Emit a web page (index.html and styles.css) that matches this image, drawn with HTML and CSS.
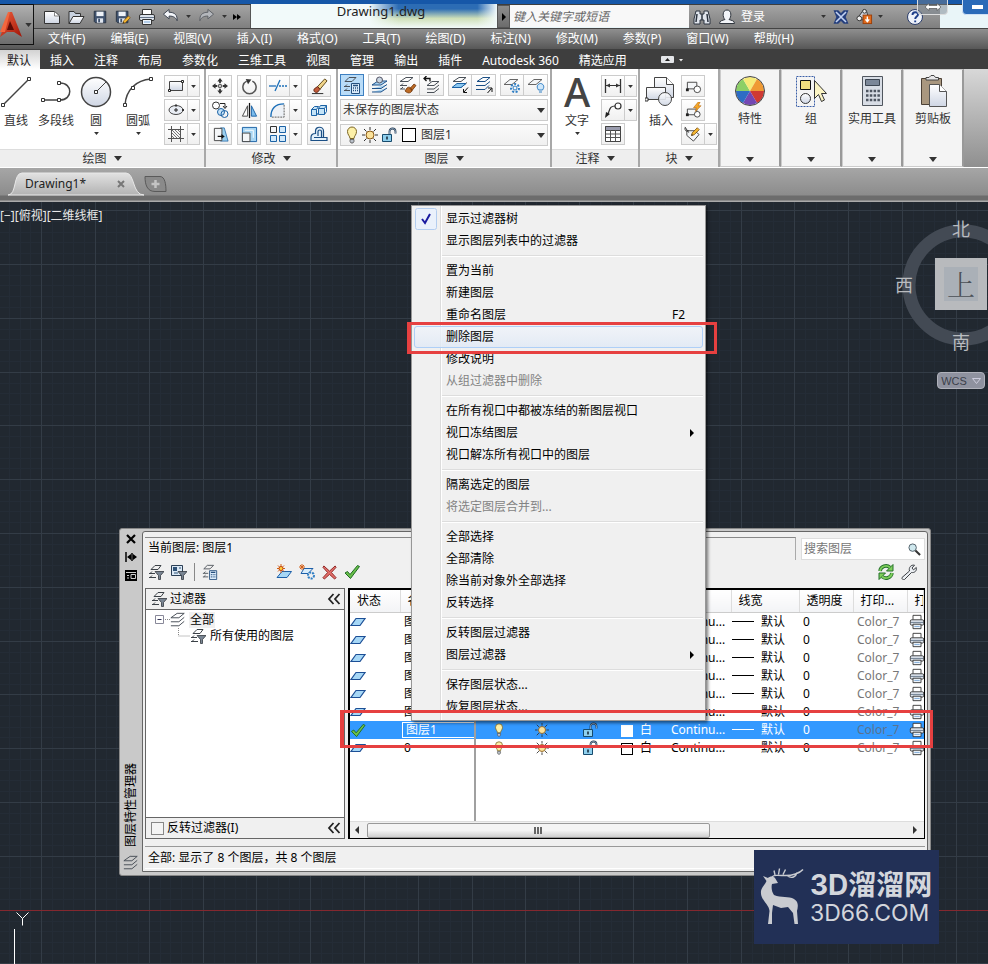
FILE: index.html
```html
<!DOCTYPE html>
<html lang="zh-CN">
<head>
<meta charset="utf-8">
<title>Drawing1.dwg</title>
<link rel="stylesheet" href="styles.css">
</head>
<body>
<svg class="defs" aria-hidden="true">
  <defs>
    <linearGradient id="gSheet" x1="0" y1="0" x2="0" y2="1"><stop offset="0" stop-color="#fff"/><stop offset="1" stop-color="#cfd6e4"/></linearGradient>
    <linearGradient id="gRed" x1="0" y1="0" x2="1" y2="1"><stop offset="0" stop-color="#f0603c"/><stop offset="1" stop-color="#a01408"/></linearGradient>
    <pattern id="grid" width="269" height="269" patternUnits="userSpaceOnUse" x="41" y="8">
      <path shape-rendering="crispEdges" stroke="#242c36" fill="none" d="M11.5 0V269M22.5 0V269M32.5 0V269M43.5 0V269M65.5 0V269M75.5 0V269M86.5 0V269M97.5 0V269M119.5 0V269M129.5 0V269M140.5 0V269M151.5 0V269M173.5 0V269M183.5 0V269M194.5 0V269M205.5 0V269M226.5 0V269M237.5 0V269M248.5 0V269M258.5 0V269M0 11.5H269M0 22.5H269M0 32.5H269M0 43.5H269M0 65.5H269M0 75.5H269M0 86.5H269M0 97.5H269M0 119.5H269M0 129.5H269M0 140.5H269M0 151.5H269M0 173.5H269M0 183.5H269M0 194.5H269M0 205.5H269M0 226.5H269M0 237.5H269M0 248.5H269M0 258.5H269"/>
      <path shape-rendering="crispEdges" stroke="#333c46" fill="none" d="M.5 0V269M54.5 0V269M108.5 0V269M162.5 0V269M215.5 0V269M0 .5H269M0 54.5H269M0 108.5H269M0 162.5H269M0 215.5H269"/>
    </pattern>
  </defs>
  <symbol id="down" viewBox="0 0 8 5"><path d="M0 0h8L4 5z" fill="currentColor"/></symbol>
  <symbol id="new" viewBox="0 0 18 18"><path d="M1.500 3.500h10l5 4.500v7.500h-15z" fill="url(#gSheet)" stroke="#333"/><path d="M11.500 3.500v4.500h5z" fill="#fff" stroke="#555" stroke-width=".7"/></symbol>
  <symbol id="open" viewBox="0 0 18 18"><path d="M2 15.500v-12h5l1.500 2h5v3" fill="#c9d2e0" stroke="#333"/><path d="M2 15.500l4-7h11l-4 7z" fill="url(#gSheet)" stroke="#333"/></symbol>
  <symbol id="save" viewBox="0 0 18 18"><path d="M2.500 2.500h13v13H4L2.500 14z" fill="#40536f" stroke="#26303f"/><path d="M5 3h8v5H5z" fill="#eef2f8"/><path d="M5.500 10.500h7v5h-7z" fill="#dfe5ee"/><path d="M7 11h2v4H7z" fill="#40536f"/></symbol>
  <symbol id="pencil" viewBox="0 0 12 12"><path d="M1 11l1-3.500 6.500-6.500 2.500 2.500L4.500 10z" fill="#f3b632" stroke="#6c4208" stroke-width=".9"/><path d="M1 11l.6-2 1.500 1.500z" fill="#222"/></symbol>
  <symbol id="saveas" viewBox="0 0 20 18"><use href="#save" width="18" height="18"/><use href="#pencil" x="9" y="7" width="10" height="10"/></symbol>
  <symbol id="printer" viewBox="0 0 18 18"><path d="M4.500 6.500v-5h9v5" fill="#fff" stroke="#333"/><rect x="1.500" y="6.500" width="15" height="6" rx="1.500" fill="#dce3ec" stroke="#333"/><path d="M2 9.500h14" stroke="#67768a"/><path d="M4.500 11.500h9v5h-9z" fill="#eef4fa" stroke="#333"/><path d="M6 14h6" stroke="#7aa7d8"/></symbol>
  <symbol id="undo" viewBox="0 0 18 18"><path d="M1.500 6.500L7.500 1.500v3c6 0 9 3 8.500 9-1-3-3.500-5-8.500-5v3z" fill="#f4f6fa" stroke="#38404c"/></symbol>
  <symbol id="redo" viewBox="0 0 18 18"><path d="M16.500 6.500L10.500 1.500v3c-6 0-9 3-8.500 9 1-3 3.500-5 8.500-5v3z" fill="#b4b7bc" stroke="#5a5e64"/></symbol>
  <symbol id="binoc" viewBox="0 0 18 18"><path d="M3 3h4v3h4V3h4l2 8v5h-6v-4H7v4H1v-5z" fill="#dfe4ec" stroke="#2c3440"/><path d="M4 6l-1 8M14 6l1 8M9 6v6" stroke="#2c3440" stroke-width="1.500"/></symbol>
  <symbol id="user" viewBox="0 0 18 18"><path d="M1.500 15.500c0-3 3-3 5.500-4-2.500-2-3-9.500 2-9.500s4.500 7.500 2 9.500c2.500 1 5.500 1 5.500 4z" fill="#f2f4f8" stroke="#30363e"/></symbol>
  <symbol id="exch" viewBox="0 0 16 16"><path d="M1.500 2h3.500L8 5l3-3h3.500L12 8l2.500 6H11L8 11l-3 3H1.500L4 8z" fill="#26407e" stroke="#26407e" stroke-width="1.300"/><path d="M3 3l5 5-5 5M13 3L8 8l5 5" fill="none" stroke="#c3d3f2" stroke-width="1.600"/></symbol>
  <symbol id="update" viewBox="0 0 18 18"><path d="M1.500 11L4 7.500 8 2l3 1 1.500 5M1.500 11l2 2 6-1" fill="#cfd6e2" stroke="#333"/><circle cx="9" cy="3.500" r="2" fill="#eee" stroke="#333"/><circle cx="3.500" cy="11" r="2.500" fill="#eee" stroke="#333"/><rect x="7.500" y="7.500" width="9" height="9" fill="#e06a1c" stroke="#9c3f08"/><path d="M12 9v5M10 12l2 2.500 2-2.500" stroke="#fff" stroke-width="1.500" fill="none"/></symbol>
  <symbol id="help" viewBox="0 0 18 18"><circle cx="9" cy="9" r="7.500" fill="#eef2fa" stroke="#2a3c6a"/><path d="M6.500 7c0-3.500 5.500-3.500 5.500-.5C12 8.500 9.200 8.500 9.200 11M9.200 12.500v1.800" fill="none" stroke="#1f3f8a" stroke-width="1.900"/></symbol>

  <symbol id="line" viewBox="0 0 32 32"><path d="M3 29L29 3" stroke="#444" stroke-width="1.500"/><path d="M1.500 27.500h3v3h-3zM27.500 1.500h3v3h-3z" fill="#fff" stroke="#333"/></symbol>
  <symbol id="pline" viewBox="0 0 32 32"><path d="M3 24h17c13 0 13-17 0-17" fill="none" stroke="#444" stroke-width="1.500"/><path d="M1.500 22.500h3v3h-3zM17.500 22.500h3v3h-3zM17.500 5.500h3v3h-3z" fill="#fff" stroke="#333"/></symbol>
  <symbol id="circle" viewBox="0 0 32 32"><circle cx="16" cy="16" r="14.500" fill="url(#gSheet)" stroke="#444" stroke-width="1.500"/><path d="M16 16L26 6" stroke="#444"/><path d="M14.500 14.500h3v3h-3z" fill="#fff" stroke="#333"/></symbol>
  <symbol id="arc" viewBox="0 0 32 32"><path d="M3 29C4 14 14 4 29 3" fill="none" stroke="#444" stroke-width="1.500"/><path d="M1.500 27.500h3v3h-3zM27.500 1.500h3v3h-3zM9.500 10.500h3v3h-3z" fill="#fff" stroke="#333"/></symbol>
  <symbol id="rect" viewBox="0 0 18 18"><path d="M2.500 4.500h13v9h-13z" fill="url(#gSheet)" stroke="#444"/><path d="M1.500 12.500h2v2h-2zM14.500 3.500h2v2h-2z" fill="#fff" stroke="#222"/></symbol>
  <symbol id="ellipse" viewBox="0 0 18 18"><ellipse cx="9" cy="9" rx="7" ry="4.500" fill="#e9edf4" stroke="#444"/><path d="M9 7v4M7 9h4" stroke="#222"/><path d="M8 3.500h2v2H8zM15 8h2v2h-2z" fill="#333"/></symbol>
  <symbol id="hatch" viewBox="0 0 18 18"><path d="M4.500 1v16M13.500 1v16M1 4.500h16M1 13.500h16" stroke="#555"/><path d="M5 5l8 8M5 8l5 5M8 5l5 5M5 11l2 2M11 5l2 2" stroke="#777"/></symbol>
  <symbol id="move" viewBox="0 0 18 18"><path d="M9 0l3 4H6zM9 18l3-4H6zM0 9l4-3v6zM18 9l-4-3v6z" fill="#333"/><path d="M9 3v3M9 12v3M3 9h3M12 9h3" stroke="#333" stroke-width="2"/><path d="M7.500 7.500h3v3h-3z" fill="#fff" stroke="#333"/></symbol>
  <symbol id="rotate" viewBox="0 0 18 18"><path d="M6 3.300A7 7 0 1 0 12 3.300" fill="none" stroke="#555" stroke-width="1.600"/><path d="M5 1l6 .5-3.500 5z" fill="#333"/></symbol>
  <symbol id="trim" viewBox="0 0 18 18"><path d="M0 9h7" stroke="#1c6fb8" stroke-width="1.300"/><path d="M10 9h8" stroke="#1c6fb8" stroke-width="1.300" stroke-dasharray="2 1"/><path d="M6 14L11 3" stroke="#1c6fb8" stroke-width="1.300"/></symbol>
  <symbol id="erase" viewBox="0 0 18 18"><path d="M1 16.500h12" stroke="#222"/><path d="M7 9l7.500-8L17 3l-7.500 9z" fill="#f0d489" stroke="#5c4515"/><path d="M3.500 11.500L7 9l2.500 3-2.500 3c-2.500 1-5-1-3.500-3.500z" fill="#c25a38" stroke="#5d2412"/></symbol>
  <symbol id="copy" viewBox="0 0 18 18"><circle cx="5" cy="4.500" r="3.500" fill="#fff" stroke="#333"/><circle cx="10" cy="11" r="3.500" fill="#c6e2f7" stroke="#1b62a5"/><circle cx="13.500" cy="13" r="3.500" fill="none" stroke="#1b62a5"/><path d="M9 2.500h5v4M12 5l2 2.500L16 5" fill="none" stroke="#222"/></symbol>
  <symbol id="mirror" viewBox="0 0 18 18"><path d="M7 4v11H1.500z" fill="#fff" stroke="#444"/><path d="M11 4v11h5.500z" fill="#7bbcec" stroke="#1b62a5"/><path d="M9 1v16" stroke="#111" stroke-width="1.300"/></symbol>
  <symbol id="fillet" viewBox="0 0 18 18"><path d="M2 16C2 7 7 2 16 2v14z" fill="#edf1f6"/><path d="M2 16C2 7 7 2 16 2" fill="none" stroke="#1c6fb8" stroke-width="1.500"/><path d="M16 3v13H3" fill="none" stroke="#555" stroke-dasharray="2 1"/></symbol>
  <symbol id="explode" viewBox="0 0 18 18"><path d="M1.500 8.500l3-3h4l-2 3v6h-5zM8.500 7.500l2-3h6l-2 3v6h-6z" fill="#c4e3f7" stroke="#1b62a5"/><path d="M1.500 8.500h5M8.500 7.500h6M16.500 4.500v6l-2 3M6.500 14.500l2-3" fill="none" stroke="#1b62a5"/></symbol>
  <symbol id="stretch" viewBox="0 0 18 18"><path d="M9 2h4l4 14H9z" fill="#9bd0f0" stroke="#1b62a5" stroke-width=".8"/><path d="M2.500 2.500h8v13h-8z" fill="#f4f6f8" stroke="#444"/><path d="M6 11h5" stroke="#111" stroke-width="1.300"/><path d="M10 8.500l3.500 2.500-3.500 2.500z" fill="#111"/></symbol>
  <symbol id="scale" viewBox="0 0 18 18"><path d="M1.500 1.500h15v15h-15z" fill="#a8d6f4" stroke="#1b62a5"/><path d="M1.500 7.500h8v9h-8z" fill="#f4f6f8" stroke="#444"/><path d="M4 4.500h9v8" fill="none" stroke="#fff"/></symbol>
  <symbol id="array" viewBox="0 0 18 18"><path d="M1.500 1.500h6v6h-6z" fill="#f4f6f8" stroke="#333"/><path d="M10.500 1.500h6v6h-6zM1.500 10.500h6v6h-6zM10.500 10.500h6v6h-6z" fill="#d2e9fa" stroke="#1b62a5"/></symbol>
  <symbol id="offset" viewBox="0 0 18 18"><path d="M1 15.500h16v-3h-3.500V6c0-5-8-5-8 0v2.500c-3 0-4.500 1.500-4.500 4z" fill="#e4f1fb" stroke="#1b4f85" stroke-width="1.200"/><path d="M4 12.500h5.500M9.500 12.500h4M8 11V6.500c0-2 3.500-2 3.500 0V12" fill="none" stroke="#1b4f85" stroke-width="1.200"/></symbol>
  <symbol id="layers" viewBox="0 0 18 18"><path d="M1 6.500h9l6-5H8zM1 11h9l6-5M1 15.500h9l6-5" fill="none" stroke="#4a5058" stroke-width="1.100"/></symbol>
  <symbol id="layerprop" viewBox="0 0 18 18"><path d="M2 5.500h7l4-4H6zM1 10.500h6M1 14.500h6M2 10.500l2-2M2 14.500l2-2" fill="none" stroke="#4a5058"/><path d="M8.500 7.500h8v10h-8z" fill="#dcecfb" stroke="#26507e"/><path d="M10 9.500h5M10 12h1M14 12h1M10 14.500h1M14 14.500h1M12 12h1M12 14.500h1" stroke="#26507e" stroke-width="1.500"/></symbol>
  <symbol id="layermatch" viewBox="0 0 18 18"><path d="M1 9h9l6-4H7zM1 12.500h9l6-4M1 16h9l6-4" fill="#a8d3f1" stroke="#20528a"/><circle cx="8.500" cy="4" r="3" fill="#c9d6e2" stroke="#556"/></symbol>
  <symbol id="layerbrush" viewBox="0 0 18 18"><path d="M1 5.500h8l5-4H7zM1 9.500h7M1 13h5M2 9.500l2-2M2 13l2-2" fill="none" stroke="#4a5058"/><path d="M15 8l2 1.500-4 5-2-2zM8 12c2-2 5 0 5 3-2 3-5 2-7 0z" fill="#bd6a24" stroke="#6b3208" stroke-width=".8"/></symbol>
  <symbol id="layerprev" viewBox="0 0 18 18"><path d="M1 2.500h6v3M3.500 0L1 2.500 3.500 5" fill="none" stroke="#111" stroke-width="1.300"/><path d="M4 9.500h7l5-4H9zM4 13h7l5-4M4 16.500h7l5-4" fill="none" stroke="#4a5058"/></symbol>
  <symbol id="layeriso" viewBox="0 0 18 18"><path d="M2 5.500h8l5-4H8zM1 11.500h9l6-5" fill="none" stroke="#4a5058"/><path d="M1 11.500h9l5-4H6z" fill="#8cc8f0" stroke="#1b62a5"/><path d="M17 11.500L13 16M12.500 13v3.500H16" stroke="#111" fill="none"/></symbol>
  <symbol id="layeruniso" viewBox="0 0 18 18"><path d="M2 5.500h8l5-4H8zM1 9.500h9l5-4M1 13.500h9l4-4" fill="none" stroke="#1b4f85"/><path d="M12.500 17l4-4.500M13 12h4v4" stroke="#111" fill="none"/></symbol>
  <symbol id="layerfrz" viewBox="0 0 18 18"><path d="M1 8.500h8l6-5H7z" fill="#f4f6f8" stroke="#666"/><circle cx="12" cy="12" r="4" fill="none" stroke="#2f7ec4" stroke-width="2" stroke-dasharray="2 1.500"/><circle cx="12" cy="12" r="2" fill="none" stroke="#2f7ec4"/></symbol>
  <symbol id="layeroff" viewBox="0 0 18 18"><path d="M1 8.500h8l6-5H7z" fill="#f4f6f8" stroke="#666"/><path d="M11.500 14c-3-4 0-6.500 2-6.500s5 2.500 2 6.500zM12 16h3" fill="#cfe7fa" stroke="#2f7ec4"/></symbol>
  <symbol id="bulb" viewBox="0 0 14 18"><path d="M5 12.500C5 10 2.500 9 2.500 5.500a4.500 4.500 0 0 1 9 0C11.500 9 9 10 9 12.500z" fill="#fdf0a8" stroke="#7a6424"/><path d="M5 13.500h4v2L8 17H6l-1-1.500z" fill="#b9c0c9" stroke="#444" stroke-width=".7"/></symbol>
  <symbol id="sun" viewBox="0 0 16 16"><path d="M8 0v3M8 13v3M0 8h3M13 8h3M2 2l2.500 2.500M11.500 11.500L14 14M14 2l-2.500 2.500M4.500 11.500L2 14" stroke="#333"/><circle cx="8" cy="8" r="4" fill="#fbe29a" stroke="#8a5a18"/></symbol>
  <symbol id="lock" viewBox="0 0 16 16"><path d="M8.500 7.500V4.500c0-4 6-4 6 0v2" fill="none" stroke="#24384e" stroke-width="1.800"/><path d="M8.500 7V4.500c0-4 6-4 6 0v2" fill="none" stroke="#a9c4de" stroke-width=".7"/><path d="M1.500 7.500h9v7h-9z" fill="#8fd0ee" stroke="#174a6c"/><path d="M6 9.500v3" stroke="#123" stroke-width="1.500"/></symbol>
  <symbol id="dim" viewBox="0 0 18 18"><path d="M1.500 2v14M16.500 2v14" stroke="#333" stroke-width="1.300"/><path d="M2 8.500h14" stroke="#333"/><path d="M2 8.500l4-2v4zM16 8.500l-4-2v4z" fill="#333"/></symbol>
  <symbol id="leader" viewBox="0 0 18 18"><circle cx="14" cy="5" r="3" fill="#fff" stroke="#333" stroke-width="1.200"/><path d="M11 5c-5 0-5 3-7 8" fill="none" stroke="#333" stroke-width="1.200"/><path d="M1 17l1-6 4 2z" fill="#222"/></symbol>
  <symbol id="table" viewBox="0 0 18 18"><path d="M1.500 1.500h15v15h-15z" fill="#fff" stroke="#444"/><path d="M1.500 1.500h15v4h-15z" fill="#9a9cae" stroke="#444"/><path d="M2 9h14M2 12.500h14M6.500 5v11M11.500 5v11" stroke="#555"/></symbol>
  <symbol id="insert" viewBox="0 0 32 32"><path d="M9.500 1.500h12l7 7v13h-19z" fill="url(#gSheet)" stroke="#444"/><path d="M21.500 1.500v7h7" fill="#fff" stroke="#444"/><path d="M1.500 11.500h19v12h-19z" fill="url(#gSheet)" stroke="#444"/><path d="M0 22h3v3H0z" fill="#fff" stroke="#333"/><circle cx="20" cy="23" r="6.500" fill="url(#gSheet)" fill-opacity=".9" stroke="#444"/></symbol>
  <symbol id="block" viewBox="0 0 18 18"><path d="M2.500 4.500h10v7h-10z" fill="#f4f6f8" stroke="#444"/><path d="M1 11h3v3H1z" fill="#222"/><circle cx="13" cy="12" r="3.500" fill="#fff" stroke="#444"/></symbol>
  <symbol id="blockedit" viewBox="0 0 18 18"><path d="M2.500 7.500h10v6h-10z" fill="#f4f6f8" stroke="#444"/><path d="M1 12h3v3H1z" fill="#222"/><circle cx="13" cy="13" r="3" fill="#fff" stroke="#444"/><path d="M14 0l-5 6h3l-1 4 6-6h-3l2-4z" fill="#f7a928" stroke="#b15f06" stroke-width=".6"/></symbol>
  <symbol id="attr" viewBox="0 0 18 18"><path d="M3 5h8l5 4-6 7-7-6z" fill="#f4f6f8" stroke="#444"/><path d="M1 1l4 6M5 5c-3 1-4 0-4-3" stroke="#333" fill="none"/><use href="#pencil" x="7" y="1" width="10" height="10"/></symbol>
  <symbol id="props" viewBox="0 0 32 32"><path d="M16 16L2 16A14 14 0 0 1 9 4z" fill="#8ccf66"/><path d="M16 16L9 4A14 14 0 0 1 23 4z" fill="#f6ea78"/><path d="M16 16L23 4A14 14 0 0 1 30 16z" fill="#ef9a34"/><path d="M16 16L30 16A14 14 0 0 1 23 28z" fill="#cf3a34"/><path d="M16 16L23 28A14 14 0 0 1 9 28z" fill="#7347b4"/><path d="M16 16L9 28A14 14 0 0 1 2 16z" fill="#2d6cc4"/><circle cx="16" cy="16" r="14.500" fill="none" stroke="#444"/></symbol>
  <symbol id="group" viewBox="0 0 32 32"><path d="M1.500 1.500h18v30h-18z" fill="none" stroke="#3a5fa8" stroke-dasharray="2 1"/><path d="M5.500 5.500h10v9h-10z" fill="#f3df80" stroke="#111"/><circle cx="10.500" cy="23.500" r="5" fill="url(#gSheet)" stroke="#333"/><path d="M19.500 5.500v18l4-4 3 7 3-1.500-3-6.500h5z" fill="#fbf4c4" stroke="#333"/></symbol>
  <symbol id="calc" viewBox="0 0 32 32"><path d="M6.500 1.500h20v29h-20z" fill="#d8dde5" stroke="#50565e"/><path d="M9.500 4.500h14v6h-14z" fill="#7b8798" stroke="#3d4652"/><path d="M10 16h14M10 20.500h14M10 25h14" stroke="#4d5560" stroke-width="2.500" stroke-dasharray="2.500 1.300"/></symbol>
  <symbol id="clip" viewBox="0 0 32 32"><path d="M4.500 3.500h20v26h-20z" fill="#a9977f" stroke="#4c4136"/><path d="M9 5V2.500h3L14 .5h3l1.500 2h3V5z" fill="#e8e8ea" stroke="#444"/><path d="M12.500 9.500h10l7 7v15h-17z" fill="url(#gSheet)" stroke="#555"/><path d="M22.500 9.500v7h7" fill="#fff" stroke="#555"/></symbol>

  <symbol id="filter" viewBox="0 0 16 16"><path d="M3 5.500h7l3-4H7zM1 9.500h6M1 13.500h7M2 9.500l2-2M2 13.500l2-2" fill="none" stroke="#3b4147"/><path d="M7 7.500h9l-3.500 4v4h-2v-4z" fill="#7a8694" stroke="#33383f" stroke-width=".8"/></symbol>
  <symbol id="groupfilter" viewBox="0 0 16 16"><path d="M.5 1.500h11v10H.5z" fill="#dbe9f6" stroke="#2b3f55"/><path d="M2 3h4v4H2z" fill="#2f5277"/><path d="M8 4h2M3 9h4" stroke="#2f5277"/><path d="M7 7.500h9l-3.500 4v4h-2v-4z" fill="#7a8694" stroke="#33383f" stroke-width=".8"/></symbol>
  <symbol id="newlayer" viewBox="0 0 16 16"><path d="M1 13.500h10l4.500-6H6z" fill="#a6d7f6" stroke="#1d5fa8"/><path d="M5 0v9M1 4.500h8M2 1.500l6 6M8 1.500l-6 6" stroke="#d2601a"/><circle cx="5" cy="4.500" r="2" fill="#ffd23c" stroke="#c2410c"/></symbol>
  <symbol id="newfrz" viewBox="0 0 16 16"><path d="M2 9.500h7l5-5H5z" fill="#d9edfb" stroke="#1d5fa8"/><path d="M3 0v6M0 3h6M1 1l4 4M5 1L1 5" stroke="#d2601a"/><circle cx="12" cy="11.500" r="3" fill="none" stroke="#2f7ec4" stroke-width="2" stroke-dasharray="2 1"/></symbol>
  <symbol id="cross" viewBox="0 0 16 16"><path d="M2 1l6 5.500L14 1l1 1.500L10 8l5 5.500-1.500 1.500L8 10l-5.500 5L1 13.500 6 8 1 2.500z" fill="#e2706c" stroke="#8e2320"/></symbol>
  <symbol id="check" viewBox="0 0 16 16"><path d="M1 9l2.500-1.500L6 10.500 13.500 1.500l2 1L6.500 14.500z" fill="#6abf4a" stroke="#1f6b25"/></symbol>
  <symbol id="plane" viewBox="0 0 16 10"><path d="M1 8.500h9l5-7H6z" fill="#a6d7f6" stroke="#1c4f96" stroke-width="1.200"/></symbol>
  <symbol id="refresh" viewBox="0 0 16 16"><path d="M2 7A6 6 0 0 1 12 3.500M14 9A6 6 0 0 1 4 12.500" fill="none" stroke="#24702a" stroke-width="3.600"/><path d="M15 .5v6.500H8.500zM1 15.500V9h6.500z" fill="#7fcf5c" stroke="#24702a"/><path d="M2 7A6 6 0 0 1 12 3.500M14 9A6 6 0 0 1 4 12.500" fill="none" stroke="#7fcf5c" stroke-width="1.800"/></symbol>
  <symbol id="wrench" viewBox="0 0 16 16"><path d="M1 13.500L8.500 7C7.500 3.500 10 .5 13.500 1.200L11 4l1.500 1.800 2.800-2.300C16 7 13.500 9 10.500 8.500L3.500 15.500C2 16 .5 15 1 13.500z" fill="#eceff3" stroke="#3c4045"/></symbol>
  <symbol id="mag" viewBox="0 0 14 14"><circle cx="5" cy="5" r="4" fill="#cfe8ee" stroke="#4b5a64"/><path d="M8 8l5 5" stroke="#333" stroke-width="2.200"/></symbol>
  <symbol id="chev" viewBox="0 0 14 12"><path d="M6.500 1L2 6l4.500 5M12.500 1L8 6l4.500 5" fill="none" stroke="#222" stroke-width="1.800"/></symbol>
  <symbol id="deer" viewBox="0 0 44 58"><path d="M3 8l5 2c2-2 5-2 7 0l3 5-6 1c-1 4 0 8 2 11 7 3 15 1 20 4 5 3 4 8 3 12l1 13h-3.500l-1.500-11-5-6-7 1-8-3-1 8v11H8l1.500-13C9 36 0 32 1 23c.6-4 4-6 5.500-10z" fill="#c9cbd0"/><path d="M12 9C14 6 17 8 24 7.500 32 8 40 5 43 1.500M15 7l-1-4.500M18.500 6.500l1-6M23 6.500l2.500-5M27 7.500c5 4 9 1 10-3" fill="none" stroke="#c9cbd0" stroke-width="1.400"/></symbol>
</svg>

<header class="top">
  <button class="app" aria-label="应用程序菜单"><svg width="22" height="26" viewBox="0 0 22 26"><path d="M9 0h3l10 25-8-5H7l-7 5z" fill="url(#gRed)"/><path d="M10 0L5 20H0L8 0z" fill="#f2673f"/><path d="M10 9l4 9H7z" fill="#5c0b06"/></svg><svg class="ar" width="7" height="4"><use href="#down"/></svg></button>
  <div class="title">
    <div class="quick">
      <button aria-label="新建"><svg width="18" height="18"><use href="#new"/></svg></button>
      <button aria-label="打开"><svg width="18" height="18"><use href="#open"/></svg></button>
      <button aria-label="保存"><svg width="16" height="16"><use href="#save"/></svg></button>
      <button aria-label="另存为"><svg width="18" height="16"><use href="#saveas"/></svg></button>
      <button aria-label="打印"><svg width="18" height="18"><use href="#printer"/></svg></button>
      <button aria-label="放弃"><svg width="17" height="17"><use href="#undo"/></svg><svg class="ar" width="5" height="3"><use href="#down"/></svg></button>
      <button aria-label="重做"><svg width="17" height="17"><use href="#redo"/></svg><svg class="ar" width="5" height="3"><use href="#down"/></svg></button>
      <button aria-label="更多"><svg width="8" height="8" viewBox="0 0 8 8"><path d="M0 1l4 3-4 3zM4 1l4 3-4 3z" fill="#000"/></svg></button>
    </div>
    <div class="docname">Drawing1.dwg</div>
    <button class="expand" aria-label="展开"><svg width="4" height="8" viewBox="0 0 4 8"><path d="M0 0l4 4-4 4z"/></svg></button>
    <input class="search" type="text" placeholder="键入关键字或短语" aria-label="搜索">
    <div class="info">
      <button aria-label="查找"><svg width="18" height="18"><use href="#binoc"/></svg></button>
      <button class="login"><svg width="18" height="18"><use href="#user"/></svg>登录</button>
      <svg class="ar" width="5" height="3"><use href="#down"/></svg>
      <button aria-label="交换"><svg width="16" height="16"><use href="#exch"/></svg></button>
      <button aria-label="更新"><svg width="17" height="17"><use href="#update"/></svg><svg class="ar" width="5" height="3"><use href="#down"/></svg></button>
      <button class="helpb" aria-label="帮助"><svg width="18" height="18"><use href="#help"/></svg></button>
    </div>
    <div class="winctl">
      <button class="resize" aria-label="调整"><svg width="18" height="8" viewBox="0 0 18 8"><path d="M1 4l4-3.500v2h8v-2L17 4l-4 3.500v-2H5v2z" fill="#fff" stroke="#555" stroke-width=".7"/></svg></button>
      <button class="min" aria-label="最小化"><i></i></button>
    </div>
  </div>
  <nav class="menubar">
    <a href="#">文件(F)</a><a href="#">编辑(E)</a><a href="#">视图(V)</a><a href="#">插入(I)</a><a href="#">格式(O)</a><a href="#">工具(T)</a><a href="#">绘图(D)</a><a href="#">标注(N)</a><a href="#">修改(M)</a><a href="#">参数(P)</a><a href="#">窗口(W)</a><a href="#">帮助(H)</a>
  </nav>
  <nav class="tabs">
    <a href="#" class="on">默认</a><a href="#">插入</a><a href="#">注释</a><a href="#">布局</a><a href="#">参数化</a><a href="#">三维工具</a><a href="#">视图</a><a href="#">管理</a><a href="#">输出</a><a href="#">插件</a><a href="#">Autodesk 360</a><a href="#">精选应用</a>
    <button class="ribtog" aria-label="最小化功能区"><svg width="22" height="8" viewBox="0 0 22 8"><rect width="13" height="7" rx="1" fill="#e4e6e9"/><path d="M4 5l2.500-3L9 5z" fill="#222"/><path d="M18 3h4l-2 2.500z" fill="#eee"/></svg></button>
  </nav>
</header>

<section class="ribbon">
  <div class="panel p-draw">
    <div class="body">
      <div class="bigs">
        <button class="big w32"><svg width="32" height="32"><use href="#line"/></svg>直线</button>
        <button class="big w48"><svg width="32" height="32"><use href="#pline"/></svg>多段线</button>
        <button class="big w32"><svg width="32" height="32"><use href="#circle"/></svg>圆<svg class="ar" width="5" height="3"><use href="#down"/></svg></button>
        <button class="big w52"><svg width="32" height="32"><use href="#arc"/></svg>圆弧<svg class="ar" width="5" height="3"><use href="#down"/></svg></button>
      </div>
      <div class="col">
        <button class="sb split"><svg width="18" height="18"><use href="#rect"/></svg><i><svg width="5" height="3"><use href="#down"/></svg></i></button>
        <button class="sb split"><svg width="18" height="18"><use href="#ellipse"/></svg><i><svg width="5" height="3"><use href="#down"/></svg></i></button>
        <button class="sb split"><svg width="18" height="18"><use href="#hatch"/></svg><i><svg width="5" height="3"><use href="#down"/></svg></i></button>
      </div>
    </div>
    <button class="cap">绘图<svg width="8" height="5"><use href="#down"/></svg></button>
  </div>
  <div class="panel p-mod">
    <div class="body four">
      <div class="col"><button class="sb"><svg width="16" height="16"><use href="#move"/></svg></button><button class="sb"><svg width="18" height="18"><use href="#copy"/></svg></button><button class="sb"><svg width="17" height="17"><use href="#stretch"/></svg></button></div>
      <div class="col"><button class="sb"><svg width="17" height="17"><use href="#rotate"/></svg></button><button class="sb"><svg width="17" height="17"><use href="#mirror"/></svg></button><button class="sb"><svg width="17" height="17"><use href="#scale"/></svg></button></div>
      <div class="col"><button class="sb split"><svg width="18" height="18"><use href="#trim"/></svg><i><svg width="5" height="3"><use href="#down"/></svg></i></button><button class="sb split"><svg width="17" height="17"><use href="#fillet"/></svg><i><svg width="5" height="3"><use href="#down"/></svg></i></button><button class="sb split"><svg width="18" height="18"><use href="#array"/></svg><i><svg width="5" height="3"><use href="#down"/></svg></i></button></div>
      <div class="col"><button class="sb"><svg width="17" height="17"><use href="#erase"/></svg></button><button class="sb"><svg width="18" height="18"><use href="#explode"/></svg></button><button class="sb"><svg width="18" height="18"><use href="#offset"/></svg></button></div>
    </div>
    <button class="cap">修改<svg width="8" height="5"><use href="#down"/></svg></button>
  </div>
  <div class="panel p-layer">
    <div class="body stack">
      <div class="lrow">
        <button class="sb act"><svg width="18" height="18"><use href="#layerprop"/></svg></button>
        <button class="sb"><svg width="18" height="18"><use href="#layermatch"/></svg></button>
        <span class="pair"><button class="sb"><svg width="18" height="18"><use href="#layerbrush"/></svg></button><button class="sb"><svg width="18" height="18"><use href="#layerprev"/></svg></button></span>
        <span class="pair"><button class="sb"><svg width="18" height="18"><use href="#layeriso"/></svg></button><button class="sb"><svg width="18" height="18"><use href="#layeruniso"/></svg></button></span>
        <span class="pair"><button class="sb"><svg width="18" height="18"><use href="#layerfrz"/></svg></button><button class="sb"><svg width="18" height="18"><use href="#layeroff"/></svg></button></span>
      </div>
      <div class="combo"><select aria-label="图层状态"><option>未保存的图层状态</option></select><svg width="8" height="5"><use href="#down"/></svg></div>
      <div class="combo"><span class="cicons"><svg width="14" height="18"><use href="#bulb"/></svg><svg width="16" height="16"><use href="#sun"/></svg><svg width="16" height="16"><use href="#lock"/></svg><b class="swatch"></b></span><select aria-label="图层"><option>图层1</option></select><svg width="8" height="5"><use href="#down"/></svg></div>
    </div>
    <button class="cap">图层<svg width="8" height="5"><use href="#down"/></svg></button>
  </div>
  <div class="panel p-ann">
    <div class="body">
      <button class="big w48"><span class="bigA">A</span>文字<svg class="ar" width="5" height="3"><use href="#down"/></svg></button>
      <div class="col">
        <button class="sb split"><svg width="18" height="18"><use href="#dim"/></svg><i><svg width="5" height="3"><use href="#down"/></svg></i></button>
        <button class="sb split"><svg width="18" height="18"><use href="#leader"/></svg><i><svg width="5" height="3"><use href="#down"/></svg></i></button>
        <button class="sb"><svg width="18" height="18"><use href="#table"/></svg></button>
      </div>
    </div>
    <button class="cap">注释<svg width="8" height="5"><use href="#down"/></svg></button>
  </div>
  <div class="panel p-blk">
    <div class="body">
      <button class="big w32"><svg width="32" height="32"><use href="#insert"/></svg>插入</button>
      <div class="col">
        <button class="sb"><svg width="17" height="17"><use href="#block"/></svg></button>
        <button class="sb"><svg width="17" height="17"><use href="#blockedit"/></svg></button>
        <button class="sb split"><svg width="17" height="17"><use href="#attr"/></svg><i><svg width="5" height="3"><use href="#down"/></svg></i></button>
      </div>
    </div>
    <button class="cap">块<svg width="8" height="5"><use href="#down"/></svg></button>
  </div>
  <button class="fold"><svg width="32" height="32"><use href="#props"/></svg><span>特性</span><svg width="8" height="5"><use href="#down"/></svg></button>
  <button class="fold"><svg width="32" height="32"><use href="#group"/></svg><span>组</span><svg width="8" height="5"><use href="#down"/></svg></button>
  <button class="fold"><svg width="32" height="32"><use href="#calc"/></svg><span>实用工具</span><svg width="8" height="5"><use href="#down"/></svg></button>
  <button class="fold"><svg width="32" height="32"><use href="#clip"/></svg><span>剪贴板</span><svg width="8" height="5"><use href="#down"/></svg></button>
</section>

<div class="doctabs">
  <svg class="tabshape" width="170" height="28" viewBox="0 0 170 28"><defs><linearGradient id="gTab" x1="0" y1="0" x2="0" y2="1"><stop offset="0" stop-color="#e2e2e2"/><stop offset="1" stop-color="#b2b2b2"/></linearGradient></defs><path d="M0 27c9 0 5-22 14-22h104c9 0 6 22 18 22z" fill="url(#gTab)" stroke="#e8e8e8"/><path d="M137 8.500h15c5 0 6 8 6 15h-11c-8 0-10-7-10-15z" fill="#8a8a8a" stroke="#5a5a5a"/><path d="M147.500 12v8M143.500 16h8" stroke="#c4c4c4" stroke-width="2.500"/></svg>
  <a class="doc" href="#">Drawing1*</a><button class="x" aria-label="关闭"><svg width="8" height="8" viewBox="0 0 8 8"><path d="M1 1l6 6M7 1L1 7" stroke="#777" stroke-width="2"/></svg></button>
</div>

<main class="canvas">
  <svg class="gridbg" width="100%" height="100%"><rect width="100%" height="100%" fill="url(#grid)"/><path d="M0 708.500H4000" stroke="#84282f" fill="none" shape-rendering="crispEdges"/></svg>
  <div class="vplabel">[−][俯视][二维线框]</div>
  <div class="cube">
    <svg width="122" height="122" viewBox="0 0 122 122"><circle cx="61" cy="61" r="54" fill="none" stroke="#434a54" stroke-width="13"/></svg>
    <span class="n">北</span><span class="w">西</span><span class="s">南</span>
    <button class="face">上</button>
    <button class="wcs">WCS<svg width="9" height="6" viewBox="0 0 9 6"><path d="M.5.5h8l-4 5z" fill="none" stroke="#ccd"/></svg></button>
  </div>
  <svg class="ucs" width="40" height="60" viewBox="0 0 40 60"><path d="M16.500 8.500l6 6 6-6M22.500 14.500v7" fill="none" stroke="#fff"/><path d="M14.500 25v35" stroke="#fff" shape-rendering="crispEdges"/></svg>

  <section class="dlg" aria-label="图层特性管理器">
    <div class="rail">
      <button aria-label="关闭"><svg width="10" height="10" viewBox="0 0 10 10"><path d="M1 1l8 8M9 1L1 9" stroke="#000" stroke-width="2.200"/></svg></button>
      <button aria-label="自动隐藏"><svg width="13" height="10" viewBox="0 0 13 10"><path d="M1 0v10M7 1v8" stroke="#000" stroke-width="1.500"/><path d="M6 2v6L2 5zM8 2v6l4-3z"/></svg></button>
      <button aria-label="特性"><svg width="12" height="11" viewBox="0 0 12 11"><path d="M0 0h12v11H0z"/><path d="M1 2.500h10M2 5.500h2M2 8h2M6 4.500h4.500v4H6z" stroke="#ccc" fill="none"/></svg></button>
      <span class="vt">图层特性管理器</span>
      <svg width="16" height="16"><use href="#layers"/></svg>
    </div>
    <div class="pane">
      <div class="row1"><div class="cur">当前图层: 图层1</div><label class="find"><input type="text" placeholder="搜索图层" aria-label="搜索图层"><svg width="13" height="13"><use href="#mag"/></svg></label></div>
      <div class="row2">
        <div class="tg g1"><button><svg width="16" height="16"><use href="#filter"/></svg></button><button><svg width="16" height="16"><use href="#groupfilter"/></svg></button><b class="vs"></b><button><svg width="16" height="16"><use href="#layerprop"/></svg></button></div>
        <div class="tg"><button><svg width="16" height="16"><use href="#newlayer"/></svg></button><button><svg width="16" height="16"><use href="#newfrz"/></svg></button><button><svg width="15" height="15"><use href="#cross"/></svg></button><button><svg width="16" height="16"><use href="#check"/></svg></button></div>
        <div class="tg right"><button><svg width="16" height="16"><use href="#refresh"/></svg></button><button><svg width="16" height="16"><use href="#wrench"/></svg></button></div>
      </div>
      <div class="split2">
        <div class="filters">
          <div class="fh"><svg width="16" height="16"><use href="#filter"/></svg><span>过滤器</span><button><svg width="14" height="12"><use href="#chev"/></svg></button></div>
          <ul class="tree">
            <li><svg width="16" height="16" viewBox="0 0 16 16"><path d="M.5 3.500h8v8h-8z" fill="#fff" stroke="#889"/><path d="M2.500 7.500h4" stroke="#335"/><path d="M10 7.500h5" stroke="#888" stroke-dasharray="1 1"/></svg><svg class="lay" width="16" height="16"><use href="#layers"/></svg><span class="sel">全部</span>
              <ul><li><svg width="12" height="16" viewBox="0 0 12 16"><path d="M.5 0v8H12" fill="none" stroke="#888" stroke-dasharray="1 1"/></svg><svg width="16" height="16"><use href="#filter"/></svg><span>所有使用的图层</span></li></ul>
            </li>
          </ul>
          <div class="ff"><label><input type="checkbox">反转过滤器(I)</label><button><svg width="14" height="12"><use href="#chev"/></svg></button></div>
        </div>
        <div class="list">
          <div class="rows">
          <table>
            <colgroup><col class="c50"><col class="c76"><col class="c46"><col class="c39"><col class="c57"><col class="c49"><col class="c64"><col class="c68"><col class="c54"><col class="c54"><col></colgroup>
            <thead><tr><th>状态</th><th>名称</th><th></th><th></th><th></th><th></th><th></th><th>线宽</th><th>透明度</th><th>打印...</th><th>打</th></tr></thead>
            <tbody>
              <tr><td class="st"><svg width="16" height="10"><use href="#plane"/></svg></td><td class="nm">图层</td><td></td><td></td><td></td><td></td><td class="lt">Continu...</td><td class="lw"><i></i>默认</td><td>0</td><td class="cl">Color_7</td><td class="pr"><svg width="16" height="16"><use href="#printer"/></svg></td></tr>
              <tr><td class="st"><svg width="16" height="10"><use href="#plane"/></svg></td><td class="nm">图层</td><td></td><td></td><td></td><td></td><td class="lt">Continu...</td><td class="lw"><i></i>默认</td><td>0</td><td class="cl">Color_7</td><td class="pr"><svg width="16" height="16"><use href="#printer"/></svg></td></tr>
              <tr><td class="st"><svg width="16" height="10"><use href="#plane"/></svg></td><td class="nm">图层</td><td></td><td></td><td></td><td></td><td class="lt">Continu...</td><td class="lw"><i></i>默认</td><td>0</td><td class="cl">Color_7</td><td class="pr"><svg width="16" height="16"><use href="#printer"/></svg></td></tr>
              <tr><td class="st"><svg width="16" height="10"><use href="#plane"/></svg></td><td class="nm">图层</td><td></td><td></td><td></td><td></td><td class="lt">Continu...</td><td class="lw"><i></i>默认</td><td>0</td><td class="cl">Color_7</td><td class="pr"><svg width="16" height="16"><use href="#printer"/></svg></td></tr>
              <tr><td class="st"><svg width="16" height="10"><use href="#plane"/></svg></td><td class="nm">图层</td><td></td><td></td><td></td><td></td><td class="lt">Continu...</td><td class="lw"><i></i>默认</td><td>0</td><td class="cl">Color_7</td><td class="pr"><svg width="16" height="16"><use href="#printer"/></svg></td></tr>
              <tr><td class="st"><svg width="16" height="10"><use href="#plane"/></svg></td><td class="nm">图层</td><td></td><td></td><td></td><td></td><td class="lt">Continu...</td><td class="lw"><i></i>默认</td><td>0</td><td class="cl">Color_7</td><td class="pr"><svg width="16" height="16"><use href="#printer"/></svg></td></tr>
              <tr class="cur-row"><td class="st"><svg width="16" height="15"><use href="#check"/></svg></td><td class="nm"><span>图层1</span></td><td class="ic"><svg width="12" height="14"><use href="#bulb"/></svg></td><td class="ic"><svg width="14" height="14"><use href="#sun"/></svg></td><td class="ic"><svg width="16" height="16"><use href="#lock"/></svg></td><td class="co"><b></b>白</td><td class="lt">Continu...</td><td class="lw"><i></i>默认</td><td>0</td><td class="cl">Color_7</td><td class="pr"><svg width="16" height="16"><use href="#printer"/></svg></td></tr>
              <tr><td class="st"><svg width="16" height="10"><use href="#plane"/></svg></td><td class="nm">0</td><td class="ic"><svg width="12" height="14"><use href="#bulb"/></svg></td><td class="ic"><svg width="14" height="14"><use href="#sun"/></svg></td><td class="ic"><svg width="16" height="16"><use href="#lock"/></svg></td><td class="co"><b></b>白</td><td class="lt">Continu...</td><td class="lw"><i></i>默认</td><td>0</td><td class="cl">Color_7</td><td class="pr"><svg width="16" height="16"><use href="#printer"/></svg></td></tr>
            </tbody>
          </table>
          <div class="freeze"></div>
          </div>
          <div class="sbar"><svg width="4" height="8" viewBox="0 0 4 8"><path d="M4 0v8L0 4z" fill="#333"/></svg><div class="thumb"><i></i><i></i><i></i></div><svg width="4" height="8" viewBox="0 0 4 8"><path d="M0 0v8l4-4z" fill="#333"/></svg></div>
        </div>
      </div>
      <div class="status">全部: 显示了 8 个图层，共 8 个图层</div>
    </div>
  </section>

  <div class="ctx" role="menu">
    <button class="ticked" role="menuitem"><svg width="22" height="22" viewBox="0 0 22 22"><rect x=".5" y=".5" width="21" height="21" rx="2" fill="#eaf1fb" stroke="#b3cdef"/><path d="M7 11l3 4 5-9" fill="none" stroke="#1a1aa0" stroke-width="2"/></svg>显示过滤器树</button>
    <button role="menuitem">显示图层列表中的过滤器</button>
    <hr>
    <button role="menuitem">置为当前</button>
    <button role="menuitem">新建图层</button>
    <button role="menuitem">重命名图层<kbd>F2</kbd></button>
    <button class="hot" role="menuitem">删除图层</button>
    <button role="menuitem">修改说明</button>
    <button role="menuitem" disabled>从组过滤器中删除</button>
    <hr>
    <button role="menuitem">在所有视口中都被冻结的新图层视口</button>
    <button role="menuitem">视口冻结图层<svg class="sub" width="4" height="8" viewBox="0 0 4 8"><path d="M0 0v8l4-4z"/></svg></button>
    <button role="menuitem">视口解冻所有视口中的图层</button>
    <hr>
    <button role="menuitem">隔离选定的图层</button>
    <button role="menuitem" disabled>将选定图层合并到...</button>
    <hr>
    <button role="menuitem">全部选择</button>
    <button role="menuitem">全部清除</button>
    <button role="menuitem">除当前对象外全部选择</button>
    <button role="menuitem">反转选择</button>
    <hr>
    <button role="menuitem">反转图层过滤器</button>
    <button role="menuitem">图层过滤器<svg class="sub" width="4" height="8" viewBox="0 0 4 8"><path d="M0 0v8l4-4z"/></svg></button>
    <hr>
    <button role="menuitem">保存图层状态...</button>
    <button role="menuitem">恢复图层状态...</button>
  </div>

  <div class="mark m1"></div>
  <div class="mark m2"></div>
  <div class="brand"><svg width="44" height="58"><use href="#deer"/></svg><div><strong>3D溜溜网</strong><span>3D66.COM</span></div></div>
</main>
</body>
</html>
```
FILE: styles.css
```css
* { box-sizing: border-box; }
html, body { height: 100%; }
body {
  margin: 0;
  min-height: 100vh;
  display: flex;
  flex-direction: column;
  overflow: hidden;
  font: 12px/16px "Noto Sans", "Noto Sans CJK SC", sans-serif;
  color: #333;
  background: #212830;
}
button {
  font: inherit;
  color: inherit;
  margin: 0;
  padding: 0;
  border: 0;
  background: none;
  display: flex;
  align-items: center;
  justify-content: center;
}
input, select { font: inherit; color: inherit; margin: 0; border: 0; padding: 0; background: none; }
a { color: inherit; text-decoration: none; }
svg { display: block; flex: none; }
.defs { position: absolute; width: 0; height: 0; }

/* title bar */
.top { position: relative; flex: none; }
.app {
  position: absolute;
  z-index: 2;
  left: 0;
  top: 4px;
  width: 34px;
  height: 41px;
  gap: 3px;
  justify-content: flex-start;
  border: 1px solid #111;
  border-left: 0;
  background: linear-gradient(#b0b0b0, #6c6c6c);
}
.title {
  height: 28px;
  padding: 5px 0 0 34px;
  display: flex;
  background: linear-gradient(#1657a8 0 4px, #3d3d3d 4px 5px, transparent 5px), #e9f5f8;
}
.quick {
  width: 217px;
  padding: 0 9px;
  display: flex;
  align-items: center;
  justify-content: space-between;
  color: #333;
  border-right: 1px solid #555;
  background: linear-gradient(#a4a4a4, #7f7f7f);
}
.quick button { gap: 7px; height: 20px; }
.docname { flex: 1; margin-top: -1px; text-align: center; color: #222; font-size: 13px; line-height: 14px; padding-left: 14px; background: linear-gradient(90deg, #f2fafa 0 48%, rgba(242, 250, 250, 0) 60%, transparent 92%, #f2fafa), linear-gradient(#2c6cb4 0 20%, #cfe0b8 60%, #f2fafa); }
.expand { width: 13px; background: linear-gradient(#8c8c8c, #6c6c6c); border: 1px solid #555; }
.search { width: 179px; height: 22px; padding: 0 3px; background: #f8f8f8; }
.search::placeholder { color: #666; font-style: italic; opacity: 1; }
.info {
  width: 251px;
  padding: 0 4px;
  display: flex;
  align-items: center;
  gap: 7px;
  background: linear-gradient(#a4a4a4, #7f7f7f);
}
.info button { gap: 5px; }
.login { color: #fff; margin-right: auto; }
.info .helpb { margin: 0 12px 0 16px; }
.winctl { width: 48px; position: relative; }
.resize { position: absolute; right: 40px; top: -6px; width: 31px; height: 16px; border: 1px solid #ddd; border-radius: 0 0 4px 4px; background: rgba(120, 130, 140, .5); }
.min { position: absolute; right: -16px; top: -6px; width: 42px; height: 16px; border: 1px solid #cfe0f4; border-radius: 0 0 0 4px; background: #2a6ab8; }
.min i { width: 11px; height: 4px; margin-right: 12px; background: #fff; }

.menubar {
  height: 21px;
  padding-left: 48px;
  display: flex;
  align-items: center;
  gap: 25px;
  color: #fff;
  white-space: nowrap;
  background: linear-gradient(#8f8f8f, #575757);
  border-top: 1px solid #444;
}
.tabs { height: 20px; display: flex; color: #fff; background: #3e3e3e; line-height: 22px; white-space: nowrap; padding-top: 1px; }
.tabs a { padding: 0 10px; }
.tabs .on { padding: 0 9px 0 7px; color: #222; background: linear-gradient(#d2d2d2, #fff); }
.ribtog { margin-left: 24px; }

/* ribbon */
.ribbon { flex: none; display: flex; height: 99px; background: linear-gradient(#d8d8d8, #8f8f8f); border-bottom: 1px solid #fff; }
.panel { display: flex; flex-direction: column; background: #fff; border-right: 2px solid #a8a8a8; }
.p-draw { width: 206px; }
.p-mod { width: 132px; }
.p-layer { width: 214px; }
.p-ann { width: 88px; }
.p-blk { width: 80px; }
.body { flex: 1; display: flex; padding: 6px 2px 0; justify-content: space-between; }
.cap { height: 18px; gap: 7px; line-height: 18px; background: #eee; border-top: 1px solid #ddd; }
.bigs { display: flex; }
.p-draw .body { padding: 6px 8px 0 0; }
.big { flex-direction: column; justify-content: flex-start; line-height: 20px; height: 70px; white-space: nowrap; padding-top: 1px; }
.big > svg:first-child { margin-bottom: 3px; }
.big .ar { margin-top: 1px; }
.w32 { width: 32px; }
.w48 { width: 48px; }
.w52 { width: 52px; }
.bigA { font-size: 40px; height: 35px; line-height: 32px; font-weight: 500; color: #444; }
.col { display: flex; flex-direction: column; gap: 2px; align-items: flex-start; }
.sb { width: 24px; height: 22px; border: 1px solid #ccc; background: linear-gradient(#fff, #f0f0f0); }
.split { width: 36px; justify-content: space-between; padding-left: 2px; }
.split i { width: 12px; height: 20px; display: flex; align-items: center; justify-content: center; border-left: 1px solid #ccc; }
.p-mod .body { padding: 6px 5px 0 2px; }
.p-layer .stack { flex-direction: column; justify-content: flex-start; padding: 5px 2px 0; gap: 3px; }
.lrow { display: flex; gap: 4px; }
.pair { display: flex; }
.pair .sb + .sb { border-left: 0; }
.act { background: #b9dcf8; border-color: #3d7fc0; }
.combo { height: 22px; display: flex; align-items: center; border: 1px solid #ccc; background: linear-gradient(#fafafa, #f0f0f0); padding: 0 2px; }
.combo select { flex: 1; min-width: 0; appearance: none; }
.cicons { display: flex; align-items: center; gap: 3px; margin-right: 5px; padding-left: 2px; }
.swatch { width: 14px; height: 14px; border: 1px solid #000; background: #fff; margin-left: 2px; }
.p-ann .body { padding: 6px 1px 0 1px; }
.p-blk .body { padding: 6px 1px 0 5px; }
.fold { flex-direction: column; justify-content: flex-start; width: 61px; padding: 5px 0 4px; background: #f4f4f4; border: 1px solid #ccc; border-right: 2px solid #999; white-space: nowrap; }
.fold span { margin: 4px 0 auto; }

/* document tabs */
.doctabs { position: relative; flex: none; height: 34px; display: flex; padding-top: 8px; background: linear-gradient(#a6a6a6, #8c8c8c 27px, #6c6c6c 28px 32px, #aaa 33px); }
.tabshape { position: absolute; left: 8px; top: 0; }
.doc { position: relative; padding-left: 25px; width: 117px; color: #222; }
.x { position: relative; height: 16px; }

/* drawing area */
.canvas { position: relative; flex: 1; background: #212830; overflow: hidden; color: #000; }
.gridbg { position: absolute; inset: 0; }
.vplabel { position: absolute; left: 0; top: 6px; color: #e8e8e8; }
.cube { position: absolute; right: -36px; top: 22px; width: 122px; height: 170px; color: #b9bcc0; font: 18px/20px "Noto Sans CJK SC", sans-serif; }
.cube span { position: absolute; }
.cube .n { left: 50px; top: -6px; }
.cube .w { left: -7px; top: 50px; }
.cube .s { left: 50px; top: 107px; }
.face { position: absolute; left: 33px; top: 34px; width: 52px; height: 52px; border: 9px solid #b8babd; background: #aab0b7; color: #4b4f55; font: 300 28px/32px "Noto Serif CJK SC", "Noto Sans CJK SC", serif; }
.wcs { position: absolute; left: 35px; top: 148px; width: 48px; height: 17px; gap: 5px; border: 1px solid #b0b2bb; border-radius: 4px; background: #8f929f; color: #3b3f4a; font: 11px/14px "Liberation Sans", sans-serif; }
.ucs { position: absolute; left: 0; bottom: 0; }

/* layer manager */
.dlg { position: absolute; left: 119px; right: 57px; top: 326px; height: 348px; display: flex; padding: 2px 2px 3px 0; background: #c9c9c9; border: 1px solid #888; border-radius: 3px; }
.rail { width: 22px; flex: none; display: flex; flex-direction: column; align-items: center; gap: 8px; padding: 3px 0 1px; }
.rail button { height: 10px; width: 16px; }
.vt { margin-top: auto; writing-mode: vertical-rl; text-orientation: sideways; transform: rotate(180deg); line-height: 16px; }
.pane { flex: 1; min-width: 0; display: flex; flex-direction: column; background: #f0f0f0; border: 1px solid #666; border-radius: 3px 3px 0 0; padding: 5px 2px 2px 2px; }
.row1 { display: flex; flex: none; justify-content: space-between; gap: 5px; height: 23px; }
.cur { flex: 1; line-height: 20px; padding-left: 3px; border-top: 1px solid #888; border-right: 1px solid #aaa; }
.find { width: 124px; display: flex; align-items: center; background: #fff; border: 1px solid #ddd; padding: 0 3px 0 2px; margin-top: 1px; }
.find input { flex: 1; min-width: 0; }
.find input::placeholder { color: #777; opacity: 1; }
.row2 { display: flex; flex: none; align-items: center; height: 28px; padding: 0 8px 4px 3px; }
.tg { display: flex; align-items: center; gap: 7px; }
.g1 { width: 128px; }
.vs { width: 1px; height: 18px; background: #888; }
.right { margin-left: auto; }
.split2 { flex: 1; min-height: 0; display: flex; gap: 3px; }
.filters { width: 200px; flex: none; border: 1px solid #666; display: flex; flex-direction: column; }
.fh, .ff { height: 21px; flex: none; display: flex; align-items: center; padding: 0 3px 0 5px; gap: 3px; }
.fh { border-bottom: 1px solid #666; }
.ff { border-top: 1px solid #666; }
.fh button, .ff button { margin-left: auto; }
.ff label { display: flex; align-items: center; gap: 3px; }
.ff input { width: 13px; height: 13px; appearance: none; border: 1px solid #888; background: #f4f4f4; }
.tree, .tree ul { list-style: none; margin: 0; padding: 0; }
.tree { flex: 1; background: #fff; padding: 2px 9px; }
.tree li { display: flex; flex-wrap: wrap; align-items: center; line-height: 16px; }
.tree ul { width: 100%; padding-left: 23px; }
.tree span { margin-left: 3px; padding: 0 1px; }
.tree .lay { margin-left: -1px; }
.tree .sel { background: #f0f0f0; }
.list { flex: 1; min-width: 0; display: flex; flex-direction: column; border: 1px solid #000; border-width: 2px 1px 1px 2px; background: #fff; overflow: hidden; }
.rows { flex: 1; position: relative; overflow: hidden; }
.freeze { position: absolute; left: 124px; top: 0; bottom: 0; width: 2px; background: #a0a0a0; }
.list table { width: 100%; border-collapse: collapse; table-layout: fixed; }
.c50 { width: 50px; } .c76 { width: 76px; } .c46 { width: 46px; } .c39 { width: 39px; } .c57 { width: 57px; } .c49 { width: 49px; } .c64 { width: 64px; } .c68 { width: 68px; } .c54 { width: 54px; }
.list th { height: 22px; font-weight: normal; text-align: left; padding: 0 0 0 7px; border-right: 1px solid #ddd; border-bottom: 1px solid #ccc; background: linear-gradient(#fff, #f3f4f6); white-space: nowrap; overflow: hidden; }
.list td { height: 18px; padding: 1px 0 0 4px; line-height: 16px; white-space: nowrap; overflow: hidden; }
.list .st { padding-left: 0; }
.list .lw i { display: inline-block; width: 22px; height: 1px; margin: 0 7px 2px -3px; background: #000; vertical-align: middle; }
.list .cl { color: #777; }
.list .pr { padding: 1px 0 1px 2px; }
.list .ic svg { margin: 0 auto; }
.list .ic { padding: 1px 0 0; }
.list .co b { display: inline-block; width: 12px; height: 12px; border: 1px solid #000; background: #fff; margin: 0 7px 0 -1px; vertical-align: middle; }
.cur-row { background: #3399ff; color: #fff; }
.list .cur-row .lw i { background: #fff; }
.list .cur-row .co b { border-color: #fff; }
.list .cur-row .cl { color: #5a7390; }
.list .cur-row .nm { padding: 1px 1px 1px 2px; }
.cur-row .nm span { display: block; border: 1px solid #fff; line-height: 14px; padding-left: 3px; }
.sbar { height: 17px; flex: none; display: flex; align-items: center; padding: 0 7px 0 5px; background: #f0f0f0; border-top: 1px solid #ddd; }
.thumb { width: 61%; height: 15px; margin: 0 auto 0 8px; display: flex; gap: 1px; align-items: center; justify-content: center; border: 1px solid #999; border-radius: 2px; background: linear-gradient(#f4f4f4 50%, #cfcfcf); }
.thumb i { width: 2px; height: 7px; background: #666; }
.status { margin-top: 7px; height: 23px; flex: none; line-height: 22px; padding-left: 3px; border-top: 1px solid #999; border-bottom: 1px solid #fff; }

/* context menu */
.ctx { position: absolute; left: 411px; top: 3px; width: 295px; padding: 2px 2px 2px; border: 1px solid #979797; background: linear-gradient(90deg, transparent 28px, #dcdcdc 28px 29px, #fff 29px 30px, transparent 30px), #f0f0f0; background-origin: padding-box; box-shadow: 2px 2px 3px rgba(0, 0, 0, .5); }
.ctx button { position: relative; width: 100%; height: 22px; padding: 0 17px 0 31px; justify-content: flex-start; border: 1px solid transparent; border-radius: 3px; }
.ctx .ticked { padding-left: 0; gap: 9px; }
.ctx button:disabled { color: #838383; }
.ctx .hot { border-color: #aecff7; background: linear-gradient(rgba(240, 244, 250, .8), rgba(224, 233, 246, .8)); }
.ctx hr { height: 2px; margin: 3px 0 3px 28px; border: 0; border-top: 1px solid #ddd; border-bottom: 1px solid #fff; }
kbd { font: inherit; margin-left: auto; }
.sub { margin-left: auto; margin-right: -9px; }

/* call-outs and brand plate */
.mark { position: absolute; border: 3px solid #e64040; pointer-events: none; }
.m1 { left: 407px; top: 120px; width: 310px; height: 32px; border-left-width: 4px; }
.m2 { left: 340px; right: 55px; top: 508px; height: 38px; border-left-width: 4px; }
.brand { position: absolute; right: 49px; bottom: 20px; width: 185px; height: 94px; padding: 0 6px; display: flex; align-items: center; gap: 6px; background: #223056; color: #d3d6dc; }
.brand strong, .brand span { display: block; white-space: nowrap; }
.brand strong { font: 700 28px/32px Inter, "Noto Sans CJK SC", sans-serif; }
.brand span { font: 400 23px/24px Inter, sans-serif; }
```
